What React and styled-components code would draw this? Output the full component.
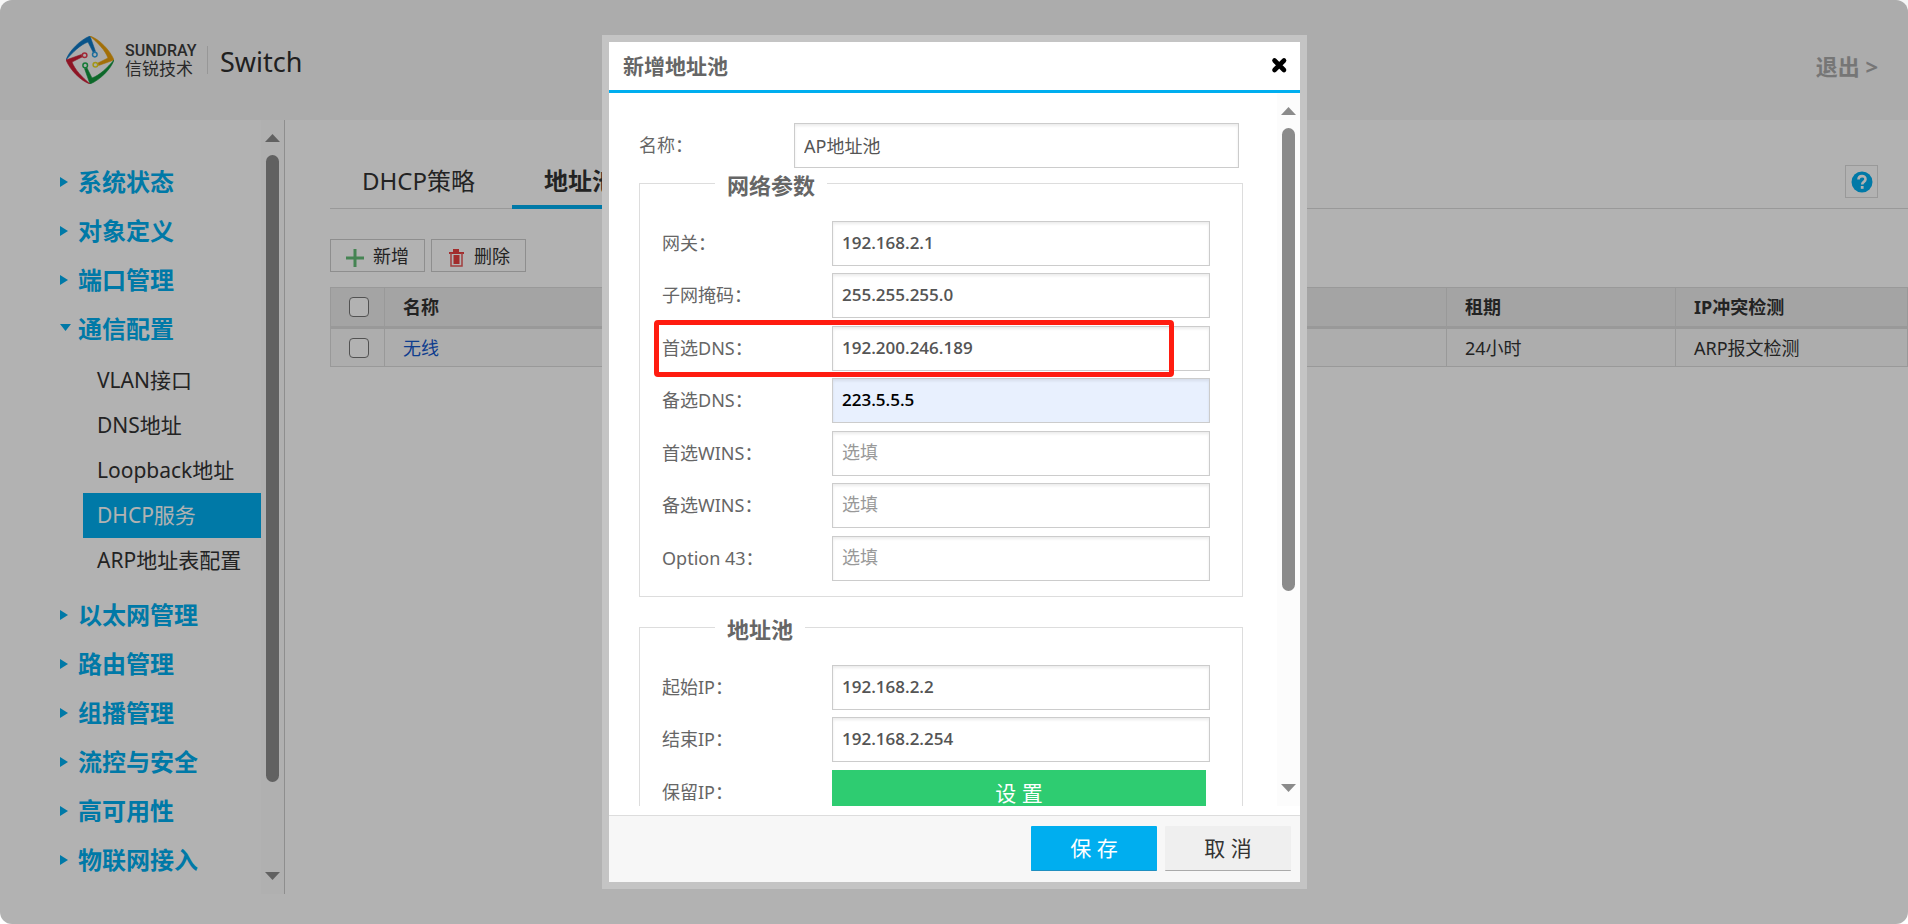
import React from "react";
import styled, { createGlobalStyle, css } from "styled-components";

const GlobalStyle = createGlobalStyle`
  *, *::before, *::after { box-sizing: border-box; }
  body {
    margin: 0;
    background: #fff;
    color: #333;
    font-family: "Noto Sans", "Noto Sans CJK SC", sans-serif;
    font-size: 18px;
    line-height: 24px;
  }
  button, input { font: inherit; color: inherit; }
  a { text-decoration: none; color: inherit; }
  ul { list-style: none; margin: 0; padding: 0; }
`;

const Page = styled.div`
  height: 100vh;
  display: flex;
  flex-direction: column;
  overflow: hidden;
`;

const Header = styled.header`
  height: 120px;
  flex: none;
  display: flex;
  align-items: center;
  justify-content: space-between;
  padding: 0 30px 0 66px;
  background: #f6f6f6;
`;

const Brand = styled.div`
  display: flex;
  align-items: center;
`;

const BrandName = styled.div`
  display: flex;
  flex-direction: column;
  width: 82px;
  margin-left: 11px;
  color: #3c3c3c;
`;

const BrandLatin = styled.span`
  font: 500 16px/16px Roboto, sans-serif;
`;

const BrandHan = styled.span`
  font: 400 17px/18px "Noto Sans CJK SC", sans-serif;
`;

const BrandRule = styled.span`
  width: 1px;
  height: 28px;
  background: #d8d8d8;
`;

const Product = styled.span`
  margin-left: 12px;
  padding-top: 4px;
  color: #2e2e2e;
  font-size: 27px;
  line-height: 36px;
`;

const Logout = styled.a`
  margin-top: 12px;
  color: #aaa;
  font-size: 22px;
  font-weight: 700;
`;

const Body = styled.div`
  flex: 1;
  min-height: 0;
  display: flex;
`;

const Sidebar = styled.aside`
  width: 285px;
  flex: none;
  display: flex;
  margin-bottom: 30px;
  border-right: 1px solid #ccc;
`;

const Menu = styled.nav`
  flex: 1;
  overflow: hidden;
  padding-top: 38px;
`;

const MenuLink = styled.a`
  display: flex;
  align-items: center;
  height: 49px;
  padding: 0 0 2px 60px;
  color: #00aeef;
  font-size: 24px;
  font-weight: 700;
`;

const Caret = styled.svg`
  width: 11px;
  height: 11px;
  margin-right: 7px;
  fill: currentColor;
`;

const SubMenu = styled.ul`
  margin: 4px 0 8px 83px;
`;

const SubLink = styled.a`
  display: flex;
  align-items: center;
  height: 45px;
  padding: 0 0 2px 14px;
  font-size: 21px;
  white-space: nowrap;
  ${(p) => p.$active && css`
    background: #00aeef;
    color: #fff;
  `}
`;

const Track = styled.div`
  width: 23px;
  flex: none;
  display: flex;
  flex-direction: column;
  align-items: center;
  padding: 14px 0;
  background: #fcfcfc;
`;

const TrackRail = styled.div`
  flex: 1;
  padding: 13px 0;
`;

const Thumb = styled.div`
  width: 13px;
  height: ${(p) => p.$share}%;
  border-radius: 7px;
  background: #8b8b8b;
`;

const TrackArrow = styled.svg`
  display: block;
  width: 15px;
  height: 8px;
  fill: #8b8b8b;
`;

const Main = styled.main`
  flex: 1;
  min-width: 0;
  padding-left: 45px;
`;

const TabBar = styled.div`
  display: flex;
  align-items: flex-end;
  height: 89px;
  gap: 5px;
  border-bottom: 1px solid #dbdbdb;
`;

const Tab = styled.button`
  height: 56px;
  margin-bottom: -1px;
  padding: 4px 32px 0;
  border: 0;
  border-bottom: 4px solid ${(p) => (p.$active ? "#00aeef" : "transparent")};
  background: none;
  font-size: 24px;
  font-weight: ${(p) => (p.$active ? 700 : 400)};
`;

const HelpButton = styled.button`
  display: flex;
  align-items: center;
  justify-content: center;
  width: 33px;
  height: 33px;
  margin: 0 30px 10px auto;
  padding: 0;
  border: 1px solid #dbdbdb;
  background: #fff;
`;

const Toolbar = styled.div`
  display: flex;
  gap: 6px;
  margin: 30px 0 15px;
`;

const ToolButton = styled.button`
  display: flex;
  align-items: center;
  gap: 9px;
  height: 33px;
  width: 95px;
  padding: 0 0 0 15px;
  border: 1px solid #ccc;
  background: #fff;
  svg { margin-top: 4px; }
`;

const Table = styled.table`
  width: 100%;
  table-layout: fixed;
  border-collapse: separate;
  border-spacing: 0;
  border: 1px solid #dbdbdb;
  text-align: left;

  th, td {
    padding: 0 18px;
    border-right: 1px solid #dbdbdb;
  }
  th:last-child, td:last-child { border-right: 0; }
  th {
    height: 41px;
    border-bottom: 3px solid #dbdbdb;
    background: #ebebeb;
    font-weight: 700;
  }
  td {
    height: 37px;
    background: #f8f8f8;
  }
`;

const CheckBox = styled.input.attrs({ type: "checkbox" })`
  appearance: none;
  display: block;
  width: 20px;
  height: 20px;
  margin: 0;
  border: 1px solid #767676;
  border-radius: 4px;
  background: #fff;
`;

const RowLink = styled.a`
  color: #1559cc;
`;

const Overlay = styled.div`
  position: fixed;
  inset: 0;
  display: flex;
  justify-content: center;
  padding: 35px 0 35px 1px;
  border-radius: 12px;
  background: rgba(0, 0, 0, 0.3);
`;

const Dialog = styled.section`
  width: 705px;
  max-width: 100%;
  display: flex;
  flex-direction: column;
  border: 7px solid #c4c4c4;
  background: #fff;
  color: #666;
`;

const DialogHeader = styled.header`
  height: 51px;
  flex: none;
  display: flex;
  align-items: center;
  justify-content: space-between;
  padding: 0 12px 0 14px;
  border-bottom: 3px solid #00aeef;
`;

const DialogTitle = styled.h2`
  margin: 0;
  font-size: 21px;
  font-weight: 700;
`;

const CloseButton = styled.button`
  display: flex;
  padding: 0 0 2px;
  border: 0;
  background: none;
  color: #000;
`;

const DialogBody = styled.div`
  flex: 1;
  min-height: 0;
  display: flex;
  margin-bottom: 9px;
`;

const Form = styled.form`
  flex: 1;
  overflow: hidden;
  padding: 30px 34px 0 30px;
`;

const Field = styled.div`
  position: relative;
  display: flex;
  align-items: center;
  height: 45px;
  padding-left: ${(p) => (p.$top ? 0 : 22)}px;
  padding-right: ${(p) => (p.$top ? 4 : 32)}px;
`;

const Label = styled.label`
  width: ${(p) => (p.$top ? 155 : 170)}px;
  flex: none;
  padding-bottom: 2px;
`;

const TextInput = styled.input`
  flex: 1;
  min-width: 0;
  height: 45px;
  padding: 0 9px 2px;
  border: 1px solid #ccc;
  border-radius: 0;
  outline: 0;
  box-shadow: inset 0 2px 3px rgba(0, 0, 0, 0.08);
  background: ${(p) => (p.$filled ? "#e8f0fe" : "#fff")};
  color: ${(p) => (p.$filled ? "#000" : "#555")};
  ${(p) => p.$address && css`
    font-family: "Open Sans", "Noto Sans CJK SC", sans-serif;
    font-size: 17px;
    font-weight: 600;
  `}
  &::placeholder {
    color: #999;
    font-size: 18px;
    font-weight: 400;
  }
`;

const Group = styled.fieldset`
  margin: 0 0 15px;
  padding: 0 0 15px;
  border: 1px solid #ddd;
  min-width: 0;
`;

const Legend = styled.legend`
  height: 30px;
  margin-left: 75px;
  padding: 0 12px;
  font-size: 22px;
  line-height: 34px;
  font-weight: 700;
`;

const Fields = styled.div`
  padding-top: 23px;
  ${Field} + ${Field} { margin-top: 7px; }
  ${Field}:nth-child(odd):not(:first-child) { margin-top: 8px; }
`;

const Highlight = styled.span`
  position: absolute;
  top: -6px;
  bottom: -6px;
  left: 14px;
  width: 520px;
  border: 5px solid #ff1c10;
  border-radius: 4px;
  pointer-events: none;
`;

const SetButton = styled.button`
  flex: 1;
  height: 45px;
  margin-right: 4px;
  padding: 0;
  border: 0;
  background: #2ecc71;
  color: #fff;
  font-size: 21px;
`;

const DialogFooter = styled.footer`
  height: 67px;
  flex: none;
  display: flex;
  justify-content: flex-end;
  gap: 8px;
  padding: 10px 9px 0 0;
  border-top: 1px solid #ddd;
  background: #f7f7f7;
`;

const FooterButton = styled.button`
  width: 126px;
  height: 45px;
  padding: 0;
  border: 0;
  border-bottom: 1px solid ${(p) => (p.$primary ? "#1f8fc0" : "#aaa")};
  border-radius: 1px;
  background: ${(p) => (p.$primary ? "#00aeef" : "#efefef")};
  color: ${(p) => (p.$primary ? "#fff" : "#333")};
  font-size: 21px;
`;

const logoBlades = [
  { turn: 0, edge: "#0d78c4", node: "#2f9fe0" },
  { turn: 90, edge: "#e8a00c", node: "#e8d820" },
  { turn: 180, edge: "#12953c", node: "#20b050" },
  { turn: 270, edge: "#cc1f36", node: "#e83c50" },
];

function Logo() {
  return (
    <svg width="48" height="48" viewBox="0 0 48 48" aria-hidden="true">
      {logoBlades.map(({ turn, edge, node }) => (
        <g key={turn} transform={`rotate(${turn} 24 24)`}>
          <path d="M0 24C3 15 14 4 24 0L29.500 15.500L27 16L22 6C14 9 7 16 0 24Z" fill={edge} stroke={edge} strokeWidth="0.6" />
          <circle cx="28.8" cy="18.6" r="2.3" fill="none" stroke={node} strokeWidth="1.5" />
        </g>
      ))}
    </svg>
  );
}

function PlusIcon() {
  return (
    <svg width="18" height="18" viewBox="0 0 18 18" aria-hidden="true">
      <path d="M9 0V18M0 9H18" stroke="#64bd78" strokeWidth="3" />
    </svg>
  );
}

function TrashIcon() {
  return (
    <svg width="18" height="18" viewBox="0 0 18 18" aria-hidden="true">
      <path d="M6 0H12V3H6Z" fill="#e84040" />
      <path d="M2 4H17" stroke="#e84040" strokeWidth="2" />
      <path d="M4 4V17H15V4" fill="none" stroke="#e85a5a" strokeWidth="1.5" />
      <path d="M6.5 6H12.5V15H6.5Z" fill="#e84040" />
    </svg>
  );
}

function HelpIcon() {
  return (
    <svg width="22" height="22" viewBox="0 0 22 22" aria-hidden="true">
      <circle cx="11" cy="11" r="10.5" fill="#00aeef" />
      <path d="M7.5 8.5C7.5 4 14.5 4 14.5 8.2C14.5 11 11.2 10.8 11.2 13.4" fill="none" stroke="#fff" strokeWidth="2.6" />
      <path d="M9.8 15H12.6V17.8H9.8Z" fill="#fff" />
    </svg>
  );
}

function CloseIcon() {
  return (
    <svg width="17" height="17" viewBox="0 0 17 17" aria-hidden="true">
      <path d="M3.5 3.5L13 13M13 3.5L3.5 13" stroke="currentColor" strokeWidth="4.6" strokeLinecap="round" />
    </svg>
  );
}

function ScrollTrack({ share }) {
  return (
    <Track aria-hidden="true">
      <TrackArrow viewBox="0 0 15 8"><path d="M0 8L7.5 0L15 8Z" /></TrackArrow>
      <TrackRail><Thumb $share={share} /></TrackRail>
      <TrackArrow viewBox="0 0 15 8"><path d="M0 0L7.5 8L15 0Z" /></TrackArrow>
    </Track>
  );
}

const menu = [
  { name: "系统状态" },
  { name: "对象定义" },
  { name: "端口管理" },
  { name: "通信配置", items: ["VLAN接口", "DNS地址", "Loopback地址", "DHCP服务", "ARP地址表配置"] },
  { name: "以太网管理" },
  { name: "路由管理" },
  { name: "组播管理" },
  { name: "流控与安全" },
  { name: "高可用性" },
  { name: "物联网接入" },
];

const networkFields = [
  { id: "gateway", label: "网关", value: "192.168.2.1" },
  { id: "mask", label: "子网掩码", value: "255.255.255.0" },
  { id: "dns1", label: "首选DNS", value: "192.200.246.189", highlight: true },
  { id: "dns2", label: "备选DNS", value: "223.5.5.5", filled: true },
  { id: "wins1", label: "首选WINS" },
  { id: "wins2", label: "备选WINS" },
  { id: "option43", label: "Option 43" },
];

const poolFields = [
  { id: "startIp", label: "起始IP", value: "192.168.2.2" },
  { id: "endIp", label: "结束IP", value: "192.168.2.254" },
];

function AddressField({ id, label, value, highlight, filled }) {
  return (
    <Field>
      <Label htmlFor={id}>{label}：</Label>
      <TextInput id={id} type="text" defaultValue={value} placeholder="选填" $address $filled={filled} />
      {highlight && <Highlight />}
    </Field>
  );
}

export default function App() {
  return (
    <>
      <GlobalStyle />
      <Page>
        <Header>
          <Brand>
            <Logo />
            <BrandName>
              <BrandLatin>SUNDRAY</BrandLatin>
              <BrandHan>信锐技术</BrandHan>
            </BrandName>
            <BrandRule />
            <Product>Switch</Product>
          </Brand>
          <Logout href="#logout">退出 &gt;</Logout>
        </Header>
        <Body>
          <Sidebar>
            <Menu>
              <ul>
                {menu.map(({ name, items }) => (
                  <li key={name}>
                    <MenuLink href="#menu">
                      <Caret viewBox="0 0 11 11" aria-hidden="true">
                        <path d={items ? "M0 1H11L5.5 8Z" : "M0 1L8 6L0 11Z"} />
                      </Caret>
                      {name}
                    </MenuLink>
                    {items && (
                      <SubMenu>
                        {items.map((item) => (
                          <li key={item}>
                            <SubLink href="#page" $active={item === "DHCP服务"}>{item}</SubLink>
                          </li>
                        ))}
                      </SubMenu>
                    )}
                  </li>
                ))}
              </ul>
            </Menu>
            <ScrollTrack share={89} />
          </Sidebar>
          <Main>
            <TabBar>
              <Tab type="button">DHCP策略</Tab>
              <Tab type="button" $active>地址池</Tab>
              <HelpButton type="button" aria-label="帮助"><HelpIcon /></HelpButton>
            </TabBar>
            <Toolbar>
              <ToolButton type="button"><PlusIcon />新增</ToolButton>
              <ToolButton type="button"><TrashIcon />删除</ToolButton>
            </Toolbar>
            <Table>
              <colgroup>
                <col width="54" />
                <col />
                <col width="229" />
                <col width="231" />
              </colgroup>
              <thead>
                <tr>
                  <th><CheckBox aria-label="全选" /></th>
                  <th>名称</th>
                  <th>租期</th>
                  <th>IP冲突检测</th>
                </tr>
              </thead>
              <tbody>
                <tr>
                  <td><CheckBox aria-label="选择无线" /></td>
                  <td><RowLink href="#pool">无线</RowLink></td>
                  <td>24小时</td>
                  <td>ARP报文检测</td>
                </tr>
              </tbody>
            </Table>
          </Main>
        </Body>
      </Page>
      <Overlay>
        <Dialog role="dialog" aria-labelledby="dialog-title">
          <DialogHeader>
            <DialogTitle id="dialog-title">新增地址池</DialogTitle>
            <CloseButton type="button" aria-label="关闭"><CloseIcon /></CloseButton>
          </DialogHeader>
          <DialogBody>
            <Form>
              <Field $top>
                <Label $top htmlFor="poolName">名称：</Label>
                <TextInput id="poolName" type="text" defaultValue="AP地址池" />
              </Field>
              <Group>
                <Legend>网络参数</Legend>
                <Fields>
                  {networkFields.map((f) => <AddressField key={f.id} {...f} />)}
                </Fields>
              </Group>
              <Group>
                <Legend>地址池</Legend>
                <Fields>
                  {poolFields.map((f) => <AddressField key={f.id} {...f} />)}
                  <Field>
                    <Label htmlFor="reserved">保留IP：</Label>
                    <SetButton id="reserved" type="button">设 置</SetButton>
                  </Field>
                </Fields>
              </Group>
            </Form>
            <ScrollTrack share={72} />
          </DialogBody>
          <DialogFooter>
            <FooterButton type="button" $primary>保 存</FooterButton>
            <FooterButton type="button">取 消</FooterButton>
          </DialogFooter>
        </Dialog>
      </Overlay>
    </>
  );
}
